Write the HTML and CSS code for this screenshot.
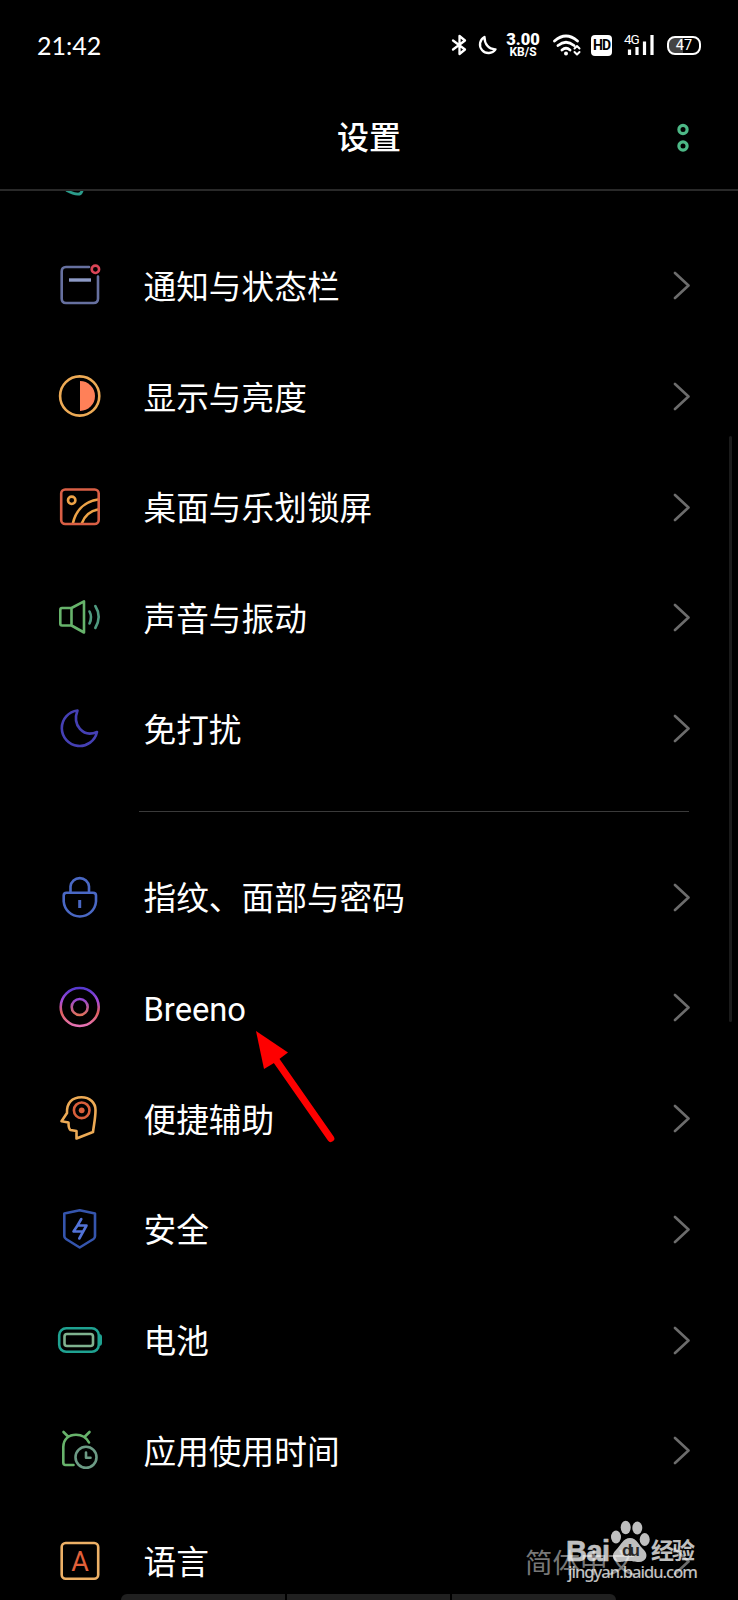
FILE: index.html
```html
<!DOCTYPE html>
<html lang="zh-CN">
<head>
    <meta charset="UTF-8">
    <meta name="viewport" content="width=device-width, initial-scale=1.0">
    <title>设置</title>
    <link rel="stylesheet" href="styles.css">
</head>
<body>

    <svg class="defs" width="0" height="0">
        <symbol id="chevron" viewBox="0 0 18 30"><path d="M3 3L16.500 15.500L3 28"/></symbol>
    </svg>

    <!-- status bar -->
    <div class="status">
        <span class="time">21:42</span>
        <svg class="bt" width="16" height="22" viewBox="0 0 16 22"><path d="M2 6.500L14 15.500L8.500 20V2L14 6.500L2 15.500"/></svg>
        <svg class="dnd" width="20" height="20" viewBox="0 0 20 20"><path d="M6.500 2A8.500 8.500 0 1 0 17.500 14.300C10.500 14.500 6.500 9 6.500 2Z"/></svg>
        <div class="speed"><b>3.00</b><small>KB/S</small></div>
        <svg class="wifi" width="28" height="22" viewBox="0 0 28 22">
            <path d="M1.500 7Q13 -3 24.500 7M5 11.500Q13 5 21 11.500M9 16Q13 12.500 17 16"/>
            <circle cx="13" cy="19.500" r="2"/>
            <path class="thin" d="M21.500 14.500L24 12L26.500 14.500M21.500 18L24 20.500L26.500 18"/>
        </svg>
        <span class="hd">HD</span>
        <div class="signal">
            <span>4G</span>
            <svg width="31" height="22" viewBox="0 0 31 22"><path d="M5.500 21V15.500M13 21V13M20.500 21V7.500M28 21V1"/></svg>
        </div>
        <span class="power">47</span>
    </div>

    <header class="header">
        <h1>设置</h1>
        <svg class="more" width="14" height="30" viewBox="0 0 14 30"><circle cx="7" cy="6.500" r="4.100"/><circle cx="7" cy="23" r="4.100"/></svg>
    </header>

    <main class="list">
        <div class="cut">
            <svg width="20" height="7" viewBox="0 0 20 7"><path d="M2 -.5Q8 3 13 3.200Q16 3.200 17 0"/></svg>
        </div>

        <div class="row">
            <svg class="icon" viewBox="0 0 48 48">
                <g stroke="#66709f"><path d="M33 6H10Q5.700 6 5.700 10.500V37.500Q5.700 42 10 42H37.500Q42 42 42 37.500V15.500"/><path stroke="#8d9ac6" stroke-width="3.400" stroke-linecap="butt" d="M13 19H35"/></g>
                <circle cx="39.400" cy="8.300" r="3.700" stroke="#db4557" stroke-width="2.600"/>
            </svg>
            <span class="label">通知与状态栏</span>
            <svg class="chevron"><use href="#chevron"/></svg>
        </div>
        <div class="row">
            <svg class="icon" viewBox="0 0 48 48">
                <circle cx="23.700" cy="24" r="19.600" stroke="#edaa55"/>
                <path d="M24 9A15 15 0 0 1 24 39Z" fill="#ff8058"/>
            </svg>
            <span class="label">显示与亮度</span>
            <svg class="chevron"><use href="#chevron"/></svg>
        </div>
        <div class="row">
            <svg class="icon" viewBox="0 0 48 48">
                <g stroke="#eda347"><circle cx="15.700" cy="17.300" r="3.700"/><path d="M17 40C20 27 29 18.500 42 16.500M26 40C29 32 34 28 42 26.500"/></g>
                <rect x="5.200" y="6.500" width="37.500" height="34.500" rx="4" stroke="#d95f45"/>
            </svg>
            <span class="label">桌面与乐划锁屏</span>
            <svg class="chevron"><use href="#chevron"/></svg>
        </div>
        <div class="row">
            <svg class="icon" viewBox="0 0 48 48">
                <path stroke="#67b36b" d="M15.500 15L28 8.300V39.500L15.500 32.500H6Q4.300 32.500 4.300 30.500V17Q4.300 15 6 15ZM15.500 15V32.500"/>
                <path stroke="#4f9a80" d="M33.500 18.500Q36.500 24 33.500 30.500M39.300 13Q46 23.500 39.300 35"/>
            </svg>
            <span class="label">声音与振动</span>
            <svg class="chevron"><use href="#chevron"/></svg>
        </div>
        <div class="row">
            <svg class="icon" viewBox="0 0 48 48">
                <path stroke="#4540b4" d="M21.500 6.500A17.800 17.800 0 1 0 41 28C27 34 16 21 21.500 6.500Z"/>
            </svg>
            <span class="label">免打扰</span>
            <svg class="chevron"><use href="#chevron"/></svg>
        </div>

        <hr>

        <div class="row">
            <svg class="icon" viewBox="0 0 48 48">
                <g stroke="#4a68c4"><path d="M14.500 19.700V13.500A9.300 9.300 0 0 1 33 13.500V19.700M10.500 19.700H37Q40 19.700 40 22.500V28.500A16.200 16.200 0 0 1 7.700 28.500V22.500Q7.700 19.700 10.500 19.700Z"/><path stroke-width="3" stroke-linecap="butt" d="M23.700 27V35"/></g>
            </svg>
            <span class="label">指纹、面部与密码</span>
            <svg class="chevron"><use href="#chevron"/></svg>
        </div>
        <div class="row">
            <svg class="icon" viewBox="0 0 48 48">
                <defs>
                    <linearGradient id="ring" x1="0" y1="0" x2="0" y2="1">
                        <stop offset="0" stop-color="#5539cf"/><stop offset=".35" stop-color="#a94ad8"/><stop offset=".65" stop-color="#e0605c"/><stop offset="1" stop-color="#e472b6"/>
                    </linearGradient>
                    <linearGradient id="dot" x1="0" y1="0" x2="0" y2="1">
                        <stop offset="0" stop-color="#9346d8"/><stop offset="1" stop-color="#e0705c"/>
                    </linearGradient>
                </defs>
                <circle cx="23.700" cy="24" r="19" stroke="url(#ring)"/>
                <circle cx="23.700" cy="24" r="8" stroke="url(#dot)"/>
            </svg>
            <span class="label">Breeno</span>
            <svg class="chevron"><use href="#chevron"/></svg>
        </div>
        <div class="row">
            <svg class="icon" viewBox="0 0 48 48">
                <path stroke="#edaa55" d="M5.500 27.300L11 19C10.500 9 16 3.200 25.500 3.200C34 3.200 39.500 9 39.500 16C39.500 24 38 30 37 38L20.500 44.500V37L14.500 36Q12.500 35 12.500 28.500Z"/>
                <circle cx="25.700" cy="16.300" r="7.800" stroke="#d95f3b"/>
                <circle cx="25.700" cy="16.300" r="2.900" fill="#d95f3b"/>
            </svg>
            <span class="label">便捷辅助</span>
            <svg class="chevron"><use href="#chevron"/></svg>
        </div>
        <div class="row">
            <svg class="icon" viewBox="0 0 48 48">
                <path stroke="#3555ad" d="M8.300 8.500L23.700 5.200L39 8.500V31Q39 33 37.500 34L23.700 42.500L10 34Q8.300 33 8.300 31Z"/>
                <path stroke="#5273d8" d="M25.300 14L21.500 20.500H30.500L23.300 33.500M21.500 20.500L17.500 26.500H27"/>
            </svg>
            <span class="label">安全</span>
            <svg class="chevron"><use href="#chevron"/></svg>
        </div>
        <div class="row">
            <svg class="icon" viewBox="0 0 48 48">
                <path d="M43 18Q46 18 46 21V27Q46 30 43 30Z" fill="#1fa291"/>
                <rect x="3.200" y="12.300" width="39.600" height="23.500" rx="7" stroke="#1fa291"/>
                <rect x="8.500" y="18" width="28.500" height="12" rx="2.500" stroke="#7fb28f"/>
            </svg>
            <span class="label">电池</span>
            <svg class="chevron"><use href="#chevron"/></svg>
        </div>
        <div class="row">
            <svg class="icon" viewBox="0 0 48 48">
                <path stroke="#67b36b" d="M17.500 39H9.500Q7.300 39 7.300 36.500V21C7.300 13 13 8.700 20 8.700C26.500 8.700 30.500 11.500 33 16.500M7.500 6L12 10.500M33.500 6L29 10.500"/>
                <g stroke="#6c9b85"><circle cx="30" cy="31.300" r="10.500"/><path d="M30 26.500V31.800H34.500"/></g>
            </svg>
            <span class="label">应用使用时间</span>
            <svg class="chevron"><use href="#chevron"/></svg>
        </div>
        <div class="row">
            <svg class="icon" viewBox="0 0 48 48">
                <rect x="5.700" y="6" width="36.500" height="35.700" rx="4" stroke="#edb066"/>
                <text x="24" y="33.500">A</text>
            </svg>
            <span class="label">语言</span>
            <span class="value">简体中文</span>
            <svg class="chevron"><use href="#chevron"/></svg>
        </div>
    </main>

    <div class="scrollbar"></div>
    <div class="dock"><i></i><i></i><i></i></div>

    <svg class="arrow" width="90" height="120" viewBox="0 0 90 120">
        <path d="M6 1L38 22.500L28 30L24 33L14 39Z"/>
        <path class="shaft" d="M26 30L80.800 108.500"/>
    </svg>

    <svg class="watermark" width="140" height="70" viewBox="0 0 140 70">
        <text class="bai" x="4" y="41" textLength="44">Bai</text>
        <ellipse cx="54" cy="17" rx="5" ry="6.500"/>
        <ellipse cx="63.700" cy="7.500" rx="5" ry="6.700"/>
        <ellipse cx="75.300" cy="8" rx="5" ry="6.500"/>
        <ellipse cx="82.700" cy="19.500" rx="5" ry="6.500"/>
        <path d="M68 18C75 18 77 26 82 30C87 35 84 42 77 42C72 42 71 41 67 41C62 41 61 42 57 42C50 42 49 34 54 30C59 25 61 18 68 18Z"/>
        <text class="du" x="60" y="36" textLength="18">du</text>
        <text class="jy" x="89" y="39" textLength="44">经验</text>
        <text class="url" x="6" y="58" textLength="130">jingyan.baidu.com</text>
    </svg>

</body>
</html>
```

FILE: styles.css
```css
* {
    box-sizing: border-box;
}
body {
    position: relative;
    margin: 0;
    height: 1600px;
    overflow: hidden;
    background: #000;
    color: #fff;
    font-family: Roboto, "Noto Sans CJK SC", sans-serif;
}
svg {
    display: block;
    flex: none;
    fill: none;
    stroke-linecap: round;
    stroke-linejoin: round;
}
.defs {
    position: absolute;
}

/* status bar */
.status {
    display: flex;
    align-items: center;
    height: 90px;
    padding: 0 37px;
}
.status svg {
    stroke: #fff;
    stroke-width: 2.3;
}
.time {
    width: 414px;
    padding-bottom: 1px;
    font-family: Lato, sans-serif;
    font-size: 25px;
}
.dnd {
    margin-left: 11px;
}
.speed {
    display: flex;
    flex-direction: column;
    align-items: center;
    width: 34px;
    margin-left: 8px;
    font-weight: bold;
}
.speed b {
    font-size: 16.5px;
    line-height: 14px;
}
.speed small {
    font-size: 12px;
    line-height: 11px;
}
.status .wifi {
    margin-left: 13px;
    stroke-width: 2.8;
}
.wifi circle {
    fill: #fff;
    stroke: none;
}
.wifi .thin {
    stroke-width: 2;
}
.hd {
    width: 21px;
    height: 21px;
    margin-left: 10px;
    border-radius: 4px;
    background: #fff;
    color: #000;
    font-size: 14px;
    font-weight: bold;
    line-height: 21px;
    text-align: center;
    letter-spacing: -1px;
}
.signal {
    position: relative;
    margin-left: 12px;
}
.signal span {
    position: absolute;
    top: -2px;
    left: 0;
    font-size: 13.5px;
    line-height: 15px;
    letter-spacing: -1px;
}
.status .signal svg {
    stroke-width: 3.2;
    stroke-linecap: butt;
}
.power {
    width: 34px;
    height: 19px;
    margin-left: 12px;
    border: 2px solid #fff;
    border-radius: 8px;
    background: linear-gradient(90deg, #444 47%, #000 47%);
    font-size: 14.5px;
    line-height: 16px;
    text-align: center;
}

.header {
    display: flex;
    align-items: center;
    height: 101px;
    padding: 0 48px 4px 62px;
    border-bottom: 2px solid #292929;
}
h1 {
    flex: 1;
    margin: 0;
    padding-top: 1px;
    font-size: 32px;
    font-weight: 500;
    line-height: 48px;
    text-align: center;
}
.more {
    stroke: #4db886;
    stroke-width: 3.2;
}

/* settings list */
.cut {
    height: 39px;
    padding-left: 65px;
}
.cut svg {
    stroke: #2b9c8b;
    stroke-width: 2.8;
}
.row {
    display: flex;
    align-items: center;
    height: 110.700px;
    padding: 0 48px 0 56px;
}
.icon {
    width: 48px;
    height: 48px;
    stroke-width: 2.6;
}
.icon text {
    fill: #e2603a;
    font-size: 27px;
    text-anchor: middle;
}
.label {
    flex: 1;
    margin-left: 39.500px;
    padding-top: 5px;
    font-size: 32.700px;
    line-height: 48px;
}
.value {
    margin-right: 37px;
    padding-top: 1px;
    color: #777;
    font-size: 27.500px;
}
.chevron {
    width: 18px;
    height: 30px;
    stroke: #6c6c6c;
    stroke-width: 2.6;
}
hr {
    height: 1px;
    margin: 28px 49px 29px 139px;
    border: 0;
    background: #3a3a3a;
}

/* things floating over the list */
.scrollbar {
    position: absolute;
    top: 436px;
    right: 6px;
    width: 3px;
    height: 586px;
    border-radius: 2px;
    background: #1b1b1b;
}
.dock {
    position: absolute;
    left: 121px;
    bottom: 0;
    display: flex;
    gap: 2px;
    width: 495px;
    height: 6px;
    border-radius: 6px 6px 0 0;
    overflow: hidden;
}
.dock i {
    flex: 1;
    background: #202020;
}
.arrow {
    position: absolute;
    top: 1030px;
    left: 250px;
    fill: #fe0000;
}
.shaft {
    stroke: #fe0000;
    stroke-width: 7;
}
.watermark {
    position: absolute;
    top: 1520px;
    left: 562px;
    fill: #fff;
    opacity: .75;
}
.bai {
    font: bold 29px "Liberation Sans", sans-serif;
    stroke: #fff;
    stroke-width: .6;
}
.du {
    fill: #333;
    font: bold 17px "Liberation Sans", sans-serif;
}
.jy {
    font: bold 23px "Noto Sans CJK SC", sans-serif;
}
.url {
    font: 500 16.500px "Noto Sans", sans-serif;
}
```
